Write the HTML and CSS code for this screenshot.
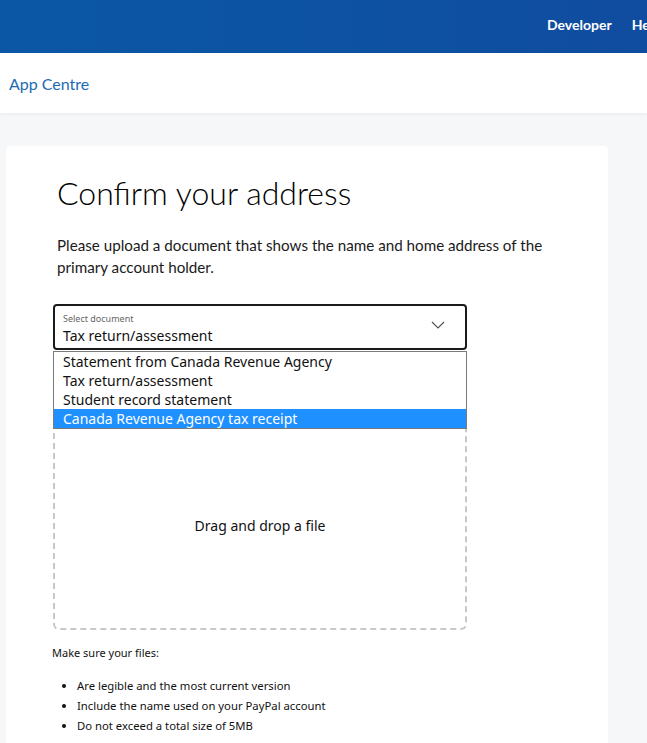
FILE: index.html
```html
<!DOCTYPE html>
<html>
<head>
    <title>Confirm your address</title>
    <link rel="stylesheet" href="styles.css">
</head>
<body>
    <div class="topbar">
        <nav class="topnav">
            <a href="#">Developer</a>
            <a href="#">Help</a>
        </nav>
    </div>
    <div class="subbar">
        <a href="#" class="brand">App Centre</a>
    </div>

    <div class="main">
        <div class="card">
            <h1>Confirm your address</h1>
            <p class="intro">Please upload a document that shows the name and home address of the primary account holder.</p>

            <div class="picker">
                <div class="select">
                    <span class="select-label">Select document</span>
                    <span class="select-value">Tax return/assessment</span>
                    <svg class="chevron" width="14" height="8" viewBox="0 0 14 8">
                        <path d="M1 1 L7 7 L13 1" fill="none" stroke="#555" stroke-width="1.2"/>
                    </svg>
                </div>
                <ul class="options">
                    <li>Statement from Canada Revenue Agency</li>
                    <li>Tax return/assessment</li>
                    <li>Student record statement</li>
                    <li class="active">Canada Revenue Agency tax receipt</li>
                </ul>
            </div>

            <div class="dropzone">Drag and drop a file</div>

            <p class="note">Make sure your files:</p>
            <ul class="rules">
                <li>Are legible and the most current version</li>
                <li>Include the name used on your PayPal account</li>
                <li>Do not exceed a total size of 5MB</li>
            </ul>
        </div>
    </div>
</body>
</html>
```

FILE: styles.css
```css
body {
    margin: 0;
    font-family: "Noto Sans", sans-serif;
    background-color: #f6f7f9;
    color: #111;
    overflow: hidden;
}
.topbar {
    height: 53px;
    background: linear-gradient(90deg, #0b57a6 0%, #0d52a3 50%, #104c9f 100%);
    display: flex;
    align-items: center;
    white-space: nowrap;
    overflow: hidden;
}
.topnav {
    display: flex;
    gap: 20px;
    margin-left: 547px;
    margin-top: -4px;
}
.topnav a {
    color: #fff;
    text-decoration: none;
    font-family: Lato, sans-serif;
    font-weight: bold;
    font-size: 14px;
}
.subbar {
    height: 60px;
    background-color: #fff;
    display: flex;
    align-items: center;
    padding-left: 9px;
    box-shadow: 0 1px 3px rgba(0, 0, 0, 0.06);
}
.brand {
    color: #1c6bb3;
    text-decoration: none;
    font-family: Lato, sans-serif;
    font-size: 16px;
    margin-top: 1px;
}
.main {
    padding: 33px 39px 0 6px;
}
.card {
    background-color: #fff;
    border-radius: 4px;
    padding: 28px 51px 40px;
    min-height: 620px;
}
h1 {
    font-family: Lato, sans-serif;
    font-weight: 300;
    font-size: 32px;
    line-height: 38px;
    margin: 0 0 22px;
    color: #000;
}
.intro {
    font-family: Lato, sans-serif;
    font-size: 15.2px;
    line-height: 22px;
    margin: 0 0 26px;
    width: 500px;
    color: #1a1a1a;
}
.picker {
    position: relative;
    width: 414px;
    margin-left: -4px;
}
.select {
    position: relative;
    height: 35px;
    border: 2px solid #1a1a1a;
    border-radius: 4px;
    padding: 7px 8px 0;
    display: flex;
    flex-direction: column;
    gap: 1px;
}
.select-label {
    font-size: 9px;
    color: #666;
    line-height: 12px;
}
.select-value {
    font-size: 14px;
    line-height: 20px;
}
.chevron {
    position: absolute;
    right: 20px;
    top: 15px;
}
.options {
    position: absolute;
    top: 47px;
    left: 0;
    width: 412px;
    margin: 0;
    padding: 0;
    list-style: none;
    background-color: #fff;
    border: 1px solid #7a7a7a;
    z-index: 2;
}
.options li {
    font-size: 14px;
    line-height: 19px;
    padding-left: 9px;
}
.options li.active {
    background-color: #1e90ff;
    color: #fff;
}
.dropzone {
    width: 410px;
    height: 206px;
    margin: 70px 0 0 -4px;
    border: 2px dashed #c8c8c8;
    border-radius: 6px;
    display: flex;
    align-items: center;
    justify-content: center;
    font-size: 14px;
}
.note {
    font-size: 11px;
    margin: 15px 0 0 -5px;
}
.rules {
    font-size: 11.3px;
    margin: 16px 0 0 -5px;
    padding-left: 25px;
}
.rules li {
    line-height: 20px;
}
```
